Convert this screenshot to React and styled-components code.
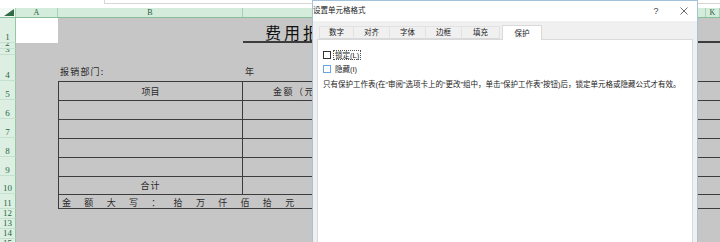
import React from 'react';
import styled, { createGlobalStyle } from 'styled-components';

const CJK = `"Noto Sans CJK SC", "Noto Sans", sans-serif`;
const UI = `"Liberation Sans", "Noto Sans CJK SC", sans-serif`;
const SERIF = `"Liberation Serif", "DejaVu Serif", serif`;

const GlobalStyle = createGlobalStyle`
  *, *::before, *::after { box-sizing: border-box; }
  html, body { margin: 0; padding: 0; background: #fff; }
  body { width: 720px; height: 242px; overflow: hidden; }
`;

const Page = styled.div`
  position: relative;
  width: 720px;
  height: 242px;
  overflow: hidden;
  background: #c6c6c6;
  display: flex;
  flex-direction: column;
`;

const TopBar = styled.div`
  height: 8px;
  flex: none;
  background: #fff;
  display: flex;
`;

const FormulaBox = styled.div`
  margin-left: 104px;
  width: 620px;
  height: 4px;
  border-left: 1px solid #d6d6d6;
  border-bottom: 1px solid #d6d6d6;
`;

const HeaderRow = styled.div`
  height: 10px;
  flex: none;
  display: flex;
  background: #d4ecdc;
  border-bottom: 1px solid #86bf98;
`;

const Corner = styled.div`
  width: 16px;
  flex: none;
  background: #f2f8f4;
  border-right: 1px solid #a9d1b5;
  display: flex;
  justify-content: flex-end;
  align-items: flex-end;
  padding: 0 1px 1px 0;
`;

const ColHead = styled.div`
  width: ${p => p.$w}px;
  flex: ${p => (p.$w ? 'none' : '1')};
  border-right: 1px solid #a9d1b5;
  font-family: ${SERIF};
  font-size: 8px;
  line-height: 9px;
  color: #24603a;
  text-align: center;
`;

const Row = styled.div`
  height: ${p => p.$h}px;
  flex: none;
  display: flex;
`;

const RowHead = styled.div`
  width: 16px;
  flex: none;
  background: #dcefe2;
  border-right: 1px solid #93c6a2;
  border-bottom: 1px solid #c4e1cd;
  display: flex;
  justify-content: center;
  align-items: flex-end;
  padding-bottom: 1px;
  overflow: hidden;
  font-family: ${SERIF};
  font-size: 9px;
  line-height: 8px;
  color: #2a6840;
`;

const Cell = styled.div`
  width: ${p => (p.$w ? `${p.$w}px` : 'auto')};
  flex: ${p => (p.$w ? 'none' : '1')};
  background: ${p => (p.$white ? '#fff' : '#c6c6c6')};
  border-top: ${p => (p.$bt ? '1px solid #3c3c3c' : 'none')};
  border-left: ${p => (p.$bl ? '1px solid #3c3c3c' : 'none')};
  border-right: ${p => (p.$br ? '1px solid #3c3c3c' : 'none')};
  border-bottom: ${p => (p.$bb ? `${p.$bb}px solid #3c3c3c` : 'none')};
  display: flex;
  align-items: flex-end;
  justify-content: ${p => p.$justify || 'flex-start'};
  padding-left: ${p => p.$pl || 0}px;
  padding-bottom: ${p => (p.$pb === undefined ? 4 : p.$pb)}px;
  overflow: hidden;
  white-space: nowrap;
  font-family: ${CJK};
  font-size: 9px;
  line-height: 9px;
  color: #2a2a2a;
`;

const SheetTitle = styled.span`
  font-size: 16px;
  line-height: 16px;
  letter-spacing: 3px;
  color: #111;
`;

const Spaced = styled.span`
  letter-spacing: ${p => p.$ls}px;
`;

const AmountLine = styled.div`
  display: flex;
  gap: 13.3px;
`;

/* dialog */

const Dialog = styled.div`
  position: absolute;
  left: 312px;
  top: 0;
  width: 386px;
  height: 262px;
  background: #f0f0f0;
  border: 1px solid #a3c2dc;
  display: flex;
  flex-direction: column;
  font-family: ${UI};
  font-size: 7.5px;
  color: #1a1a1a;
`;

const TitleBar = styled.div`
  height: 20px;
  flex: none;
  background: #fff;
  display: flex;
  align-items: center;
`;

const Title = styled.div`
  flex: 1;
  line-height: 10px;
`;

const TitleBtn = styled.div`
  width: ${p => p.$w}px;
  height: 20px;
  display: flex;
  align-items: center;
  justify-content: center;
  color: #444;
  font-size: 9px;
`;

const TabStrip = styled.div`
  height: 18px;
  flex: none;
  display: flex;
  align-items: flex-end;
  padding-left: 6px;
  position: relative;
  z-index: 1;
`;

const Tab = styled.div`
  width: ${p => p.$w}px;
  height: ${p => (p.$active ? 15 : 13)}px;
  margin-left: ${p => (p.$active ? 2 : 0)}px;
  margin-bottom: ${p => (p.$active ? -1 : 0)}px;
  background: ${p => (p.$active ? '#fff' : '#f0f0f0')};
  border: 1px solid ${p => (p.$active ? '#d9d9d9' : '#e2e2e2')};
  border-bottom: ${p => (p.$active ? 'none' : '1px solid #d9d9d9')};
  border-left: ${p => (p.$active || p.$first ? undefined : 'none')};
  display: flex;
  align-items: center;
  justify-content: center;
  padding-top: ${p => (p.$active ? 1 : 0)}px;
  line-height: 10px;
  color: #222;
`;

const Panel = styled.div`
  flex: 1;
  margin: 0 4px;
  background: #fff;
  border: 1px solid #d9d9d9;
  padding: 10px 5px 0;
  display: flex;
  flex-direction: column;
`;

const CheckRow = styled.div`
  height: 9px;
  display: flex;
  align-items: center;
  margin-bottom: ${p => p.$mb}px;
`;

const Box = styled.span`
  width: 8px;
  height: 8px;
  flex: none;
  background: #fff;
  border: 1px solid ${p => (p.$hover ? '#68a6e2' : '#333')};
  margin-right: 2px;
`;

const CheckLabel = styled.span`
  height: 10px;
  padding: 0 1px;
  line-height: 9px;
  border: 1px ${p => (p.$focus ? 'dotted #555' : 'solid transparent')};
`;

const Note = styled.div`
  line-height: 10px;
  color: #222;
  white-space: nowrap;
`;

const tabs = [
  ['数字', 35],
  ['对齐', 36],
  ['字体', 36],
  ['边框', 36],
  ['填充', 38],
  ['保护', 40, true],
];

const amountChars = ['金', '额', '大', '写', '：', '拾', '万', '仟', '佰', '拾', '元'];

export default function App() {
  return (
    <>
      <GlobalStyle />
      <Page>
        <TopBar>
          <FormulaBox />
        </TopBar>

        <HeaderRow>
          <Corner>
            <svg width="10" height="7" viewBox="0 0 10 7">
              <polygon points="10,0 10,7 0,7" fill="#2f6b45" />
            </svg>
          </Corner>
          <ColHead $w={42}>A</ColHead>
          <ColHead $w={185}>B</ColHead>
          <ColHead $w={463}>C</ColHead>
          <ColHead>K</ColHead>
        </HeaderRow>

        <Row $h={25}>
          <RowHead>1</RowHead>
          <Cell $w={42} $white />
          <Cell $w={185} />
          <Cell $bb={2} $pl={22} $pb={1}>
            <SheetTitle>费用报销单</SheetTitle>
          </Cell>
        </Row>
        <Row $h={6}>
          <RowHead>2</RowHead>
          <Cell />
        </Row>
        <Row $h={6}>
          <RowHead>3</RowHead>
          <Cell />
        </Row>
        <Row $h={26}>
          <RowHead>4</RowHead>
          <Cell $w={42} />
          <Cell $w={185} $pl={2} $pb={5}>
            <Spaced $ls={1.2}>报销部门:</Spaced>
          </Cell>
          <Cell $pl={2} $pb={5}>年</Cell>
        </Row>
        <Row $h={19}>
          <RowHead>5</RowHead>
          <Cell $w={42} />
          <Cell $w={185} $bt $bl $br $justify="center" $pb={4}>项目</Cell>
          <Cell $bt $pl={30} $pb={4}>
            <Spaced $ls={1.5}>金额（元）</Spaced>
          </Cell>
        </Row>
        {[6, 7, 8, 9].map(n => (
          <Row $h={19} key={n}>
            <RowHead>{n}</RowHead>
            <Cell $w={42} />
            <Cell $w={185} $bt $bl $br />
            <Cell $bt />
          </Row>
        ))}
        <Row $h={18}>
          <RowHead>10</RowHead>
          <Cell $w={42} />
          <Cell $w={185} $bt $bl $br $justify="center" $pb={4}>
            <Spaced $ls={1}>合计</Spaced>
          </Cell>
          <Cell $bt />
        </Row>
        <Row $h={15}>
          <RowHead>11</RowHead>
          <Cell $w={42} />
          <Cell $bt $bl $bb={1} $pl={3} $pb={1}>
            <AmountLine>
              {amountChars.map((c, i) => (
                <span key={i}>{c}</span>
              ))}
            </AmountLine>
          </Cell>
        </Row>
        {[12, 13, 14, 15].map(n => (
          <Row $h={10} key={n}>
            <RowHead>{n}</RowHead>
            <Cell />
          </Row>
        ))}

        <Dialog>
          <TitleBar>
            <Title>设置单元格格式</Title>
            <TitleBtn $w={30}>?</TitleBtn>
            <TitleBtn $w={26}>
              <svg width="8" height="8" viewBox="0 0 8 8">
                <path d="M0.5 0.5 L7.5 7.5 M7.5 0.5 L0.5 7.5" stroke="#444" strokeWidth="0.8" />
              </svg>
            </TitleBtn>
          </TitleBar>
          <TabStrip>
            {tabs.map(([label, w, active], i) => (
              <Tab key={label} $w={w} $active={active} $first={i === 0}>
                {label}
              </Tab>
            ))}
          </TabStrip>
          <Panel>
            <CheckRow $mb={5}>
              <Box />
              <CheckLabel $focus>锁定(L)</CheckLabel>
            </CheckRow>
            <CheckRow $mb={7}>
              <Box $hover />
              <CheckLabel>隐藏(I)</CheckLabel>
            </CheckRow>
            <Note>
              只有保护工作表(在“审阅”选项卡上的“更改”组中，单击“保护工作表”按钮)后，锁定单元格或隐藏公式才有效。
            </Note>
          </Panel>
        </Dialog>
      </Page>
    </>
  );
}
